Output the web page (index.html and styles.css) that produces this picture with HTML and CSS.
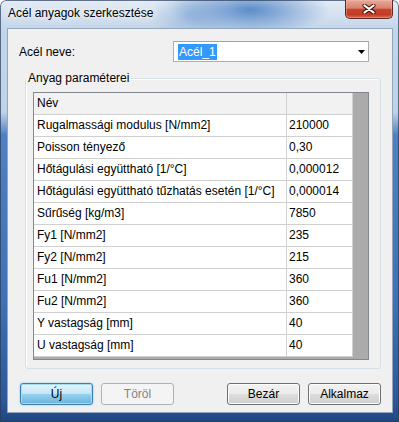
FILE: index.html
```html
<!DOCTYPE html>
<html lang="hu">
<head>
<meta charset="utf-8">
<title>Acél anyagok szerkesztése</title>
<link rel="stylesheet" href="styles.css">
</head>
<body>
<div class="window">
  <div class="titlebar">
    <span class="title">Acél anyagok szerkesztése</span>
    <button class="close" aria-label="Bezárás">
      <svg width="14" height="10" viewBox="0 0 14 10">
        <path d="M2.5 1.5 L11.5 8.5 M11.5 1.5 L2.5 8.5" stroke="#4a1a14" stroke-width="4.2" stroke-linecap="round" fill="none"/>
        <path d="M2.5 1.5 L11.5 8.5 M11.5 1.5 L2.5 8.5" stroke="#ffffff" stroke-width="2.2" stroke-linecap="round" fill="none"/>
      </svg>
    </button>
  </div>
  <div class="client">
    <div class="name-row">
      <span class="name-label">Acél neve:</span>
      <div class="combo">
        <span class="combo-text"><span class="sel">Acél_1</span></span>
        <svg class="arrow" width="7" height="4" viewBox="0 0 7 4"><polygon points="0,0 7,0 3.5,4" fill="#000"/></svg>
      </div>
    </div>
    <fieldset class="group">
      <legend>Anyag paraméterei</legend>
      <div class="grid">
        <div class="cell head c1">Név</div><div class="cell head c2"></div>
        <div class="cell c1">Rugalmassági modulus [N/mm2]</div><div class="cell c2">210000</div>
        <div class="cell c1">Poisson tényező</div><div class="cell c2">0,30</div>
        <div class="cell c1">Hőtágulási együttható [1/°C]</div><div class="cell c2">0,000012</div>
        <div class="cell c1">Hőtágulási együttható tűzhatás esetén [1/°C]</div><div class="cell c2">0,000014</div>
        <div class="cell c1">Sűrűség [kg/m3]</div><div class="cell c2">7850</div>
        <div class="cell c1">Fy1 [N/mm2]</div><div class="cell c2">235</div>
        <div class="cell c1">Fy2 [N/mm2]</div><div class="cell c2">215</div>
        <div class="cell c1">Fu1 [N/mm2]</div><div class="cell c2">360</div>
        <div class="cell c1">Fu2 [N/mm2]</div><div class="cell c2">360</div>
        <div class="cell c1">Y vastagság [mm]</div><div class="cell c2">40</div>
        <div class="cell c1">U vastagság [mm]</div><div class="cell c2">40</div>
      </div>
    </fieldset>
    <div class="buttons">
      <div class="btn-group">
        <button class="btn btn-default">Új</button>
        <button class="btn" disabled>Töröl</button>
      </div>
      <div class="btn-group">
        <button class="btn">Bezár</button>
        <button class="btn">Alkalmaz</button>
      </div>
    </div>
  </div>
</div>
</body>
</html>
```

FILE: styles.css
```css
html, body {
  margin: 0;
  padding: 0;
}
body {
  width: 399px;
  height: 422px;
  overflow: hidden;
  background: #ffffff;
  font-family: "Liberation Sans", Arial, sans-serif;
  font-size: 12px;
  color: #000;
}
.window {
  box-sizing: border-box;
  width: 399px;
  height: 422px;
  display: flex;
  flex-direction: column;
  padding: 0 6px 9px 7px;
  border-radius: 6px 6px 0 0;
  box-shadow: inset 0 0 0 1px rgba(40, 60, 90, 0.7);
  background:
    radial-gradient(ellipse 80px 26px at 250px 10px, rgba(70, 125, 195, 0.85), rgba(70, 125, 195, 0)),
    radial-gradient(ellipse 40px 30px at 190px 16px, rgba(120, 160, 210, 0.5), rgba(120, 160, 210, 0)),
    linear-gradient(to bottom, rgba(255, 255, 255, 0.55) 0, rgba(255, 255, 255, 0) 30px),
    linear-gradient(to bottom, #c4d6ea 0, #c0d2e6 112px, #4f80c2 135px, #3f71b6 300px, #2c5898 400px, #1f4680 422px);
}
.titlebar {
  height: 28px;
  flex: none;
  display: flex;
  justify-content: space-between;
  align-items: flex-start;
}
.title {
  margin: 6px 0 0 1px;
  line-height: 15px;
  color: #000;
  text-shadow: 0 0 6px rgba(255, 255, 255, 0.95), 0 0 10px rgba(255, 255, 255, 0.8);
}
.close {
  box-sizing: border-box;
  width: 48px;
  height: 19px;
  margin: 0;
  padding: 0;
  display: flex;
  align-items: center;
  justify-content: center;
  border: 1px solid #5c2a24;
  border-top: none;
  border-radius: 0 0 5px 5px;
  background: linear-gradient(to bottom, #e7a998 0%, #d9826f 45%, #c5452e 52%, #c23b24 80%, #d9694d 100%);
  box-shadow: inset 0 0 0 1px rgba(255, 200, 190, 0.35);
}
.close svg {
  display: block;
}
.client {
  flex: 1;
  box-sizing: border-box;
  background: #f0f0f0;
  border: 1px solid #94a6ba;
  display: flex;
  flex-direction: column;
}
.name-row {
  display: flex;
  align-items: center;
  margin: 12px 23px 0 11px;
  height: 21px;
}
.name-label {
  width: 154px;
  flex: none;
}
.combo {
  box-sizing: border-box;
  width: 196px;
  height: 21px;
  background: #fff;
  border: 1px solid #abadb3;
  border-top-color: #9ba5b4;
  display: flex;
  align-items: center;
  justify-content: space-between;
  padding: 0 3px 0 4px;
}
.sel {
  display: inline-block;
  background: #3399ff;
  color: #fff;
  line-height: 16px;
  padding: 0 1px;
}
.arrow {
  display: block;
}
.group {
  margin: 9px 11px 0 17px;
  padding: 0;
  border: 1px solid #d5dfe5;
  border-radius: 3px;
  box-shadow: inset 1px 1px 0 #ffffff;
}
.group legend {
  padding: 0 2px;
  margin-left: 0;
  line-height: 15px;
}
.grid {
  box-sizing: border-box;
  width: 336px;
  height: 268px;
  margin: 6px 0 8px 7px;
  border: 1px solid #828790;
  background: #ababab;
  display: grid;
  grid-template-columns: 253px 66px;
  grid-auto-rows: 22px;
  align-content: start;
}
.cell {
  box-sizing: border-box;
  background: #ffffff;
  border-right: 1px solid #d0d0d0;
  border-bottom: 1px solid #d0d0d0;
  line-height: 21px;
  white-space: nowrap;
  overflow: hidden;
}
.cell.head {
  background: #f2f2f2;
}
.c1 {
  padding-left: 3px;
}
.c2 {
  padding-left: 2px;
}
.buttons {
  display: flex;
  justify-content: space-between;
  margin: 14px 11px 0 12px;
}
.btn-group {
  display: flex;
  gap: 8px;
}
.btn {
  box-sizing: border-box;
  width: 73px;
  height: 22px;
  margin: 0;
  padding: 0;
  font-family: inherit;
  font-size: 12px;
  color: #000;
  border: 1px solid #707070;
  border-radius: 3px;
  background: linear-gradient(to bottom, #f2f2f2 0%, #ebebeb 50%, #dddddd 51%, #cfcfcf 100%);
  box-shadow: inset 0 0 0 1px #fcfcfc;
}
.btn-default {
  border-color: #3c7fb1;
  background: linear-gradient(to bottom, #e5f4fc 0%, #c4e5f6 50%, #98d1ef 51%, #68b3db 100%);
  box-shadow: inset 0 0 0 1px #a6dcf4, 0 0 2px rgba(60, 160, 220, 0.6);
}
.btn:disabled {
  color: #838383;
  border-color: #adb2b5;
  background: #f4f4f4;
  box-shadow: none;
}
```
